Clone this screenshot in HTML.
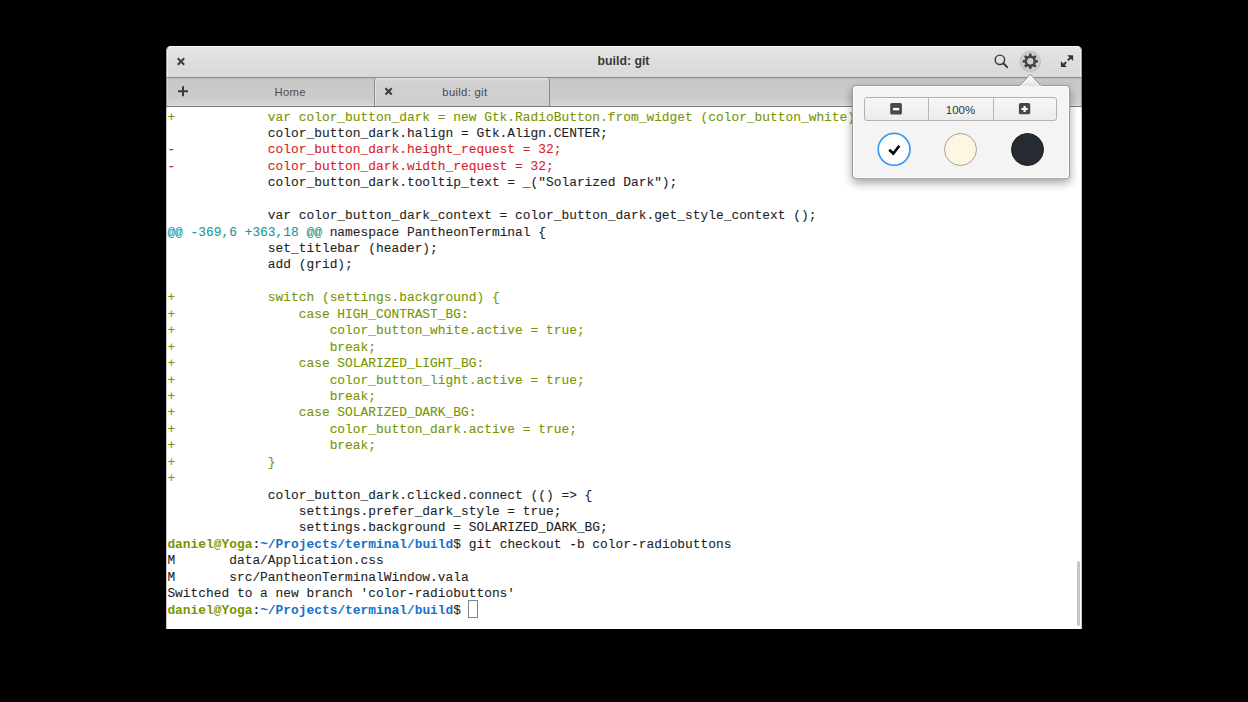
<!DOCTYPE html>
<html><head><meta charset="utf-8">
<style>
html,body{margin:0;padding:0;width:1248px;height:702px;overflow:hidden;background:#000;}
*{box-sizing:border-box;}
.a{position:absolute;}
#win{position:absolute;left:166px;top:46px;width:916px;height:583px;background:#fff;border-radius:5px 5px 0 0;overflow:hidden;}
#title{position:absolute;left:0;top:0;width:916px;height:31px;background:linear-gradient(#e4e4e4,#d8d8d8);border-top:1px solid #f6f6f6;border-left:1px solid #a0a0a0;border-right:1px solid #a0a0a0;border-radius:5px 5px 0 0;box-shadow:inset 1px 0 0 #f0f0f0,inset -1px 0 0 #f0f0f0;}
#tline{position:absolute;left:0;top:31px;width:916px;height:1px;background:#8c8c8c;}
#tabs{position:absolute;left:0;top:32px;width:916px;height:28px;background:linear-gradient(#b9b9b9 0,#c8c8c8 2px,#cccccc 20px,#d4d4d4 26px,#dcdcdc 28px);border-left:1px solid #8e8e8e;border-right:1px solid #8e8e8e;box-shadow:inset 1px 0 0 #d8d8d8;}
#bline{position:absolute;left:0;top:60px;width:916px;height:1px;background:#7c7c7c;}
#term{position:absolute;left:0;top:61px;width:916px;height:522px;background:#fff;border-left:1px solid #c4c4c4;border-right:1px solid #c4c4c4;}
.ttl{position:absolute;left:-1.5px;width:916px;top:7px;text-align:center;font:bold 12.3px "Liberation Sans",sans-serif;color:#3a3a3a;}
#activetab{position:absolute;left:207px;width:176px;top:0;height:29px;background:linear-gradient(#d9d9d9,#d1d1d1 4px,#cfcfcf);border:1px solid #8a8a8a;border-top:none;border-bottom:none;border-radius:3px 3px 0 0;box-shadow:inset 1px 1px 0 #e4e4e4;}
.tabtxt{position:absolute;font:11.3px "Liberation Sans",sans-serif;letter-spacing:0.3px;color:#555;white-space:nowrap;}
pre{margin:0;font-family:"Liberation Mono",monospace;font-size:12.887px;line-height:16.437px;color:#1f1f1f;-webkit-text-stroke:0.1px currentColor;}
#text{position:absolute;left:1.4px;top:63.5px;}
.g{color:#789500}.r{color:#d81e1e}.c{color:#19999a}.b{color:#1770cc}.bd{font-weight:bold;-webkit-text-stroke:0}
#sb{position:absolute;left:911px;top:515px;width:3px;height:65px;border-radius:2px;background:#c6c6c6;}
#cursor{position:absolute;left:302px;top:554px;width:10px;height:18px;border:1px solid #74878a;}
#pop{position:absolute;left:852px;top:85px;width:218px;height:94px;background:#f4f4f4;border:1px solid #999;border-bottom-color:#a8a8a8;border-radius:4px;box-shadow:0 4px 10px rgba(0,0,0,.36),inset 1px 1px 0 #fff,inset -1px -1px 0 #fff;}
#btns{position:absolute;left:11px;top:11px;width:193px;height:24px;border:1px solid #b2b2b2;border-radius:3px;background:linear-gradient(#f7f7f7,#ececec);}
.sep{position:absolute;top:0;width:1px;height:22px;background:#b7b7b7;}
.pct{position:absolute;left:63px;width:65px;top:5.5px;text-align:center;font:11.5px "Liberation Sans",sans-serif;color:#333;}
.circ{position:absolute;width:34px;height:34px;border-radius:50%;}
svg{position:absolute;overflow:visible;}
</style></head>
<body>
<div id="win">
  <div id="title">
    <div class="ttl">build: git</div>
  </div>
  <div id="tline"></div>
  <div id="tabs">
    <div id="activetab"></div>
    <div class="tabtxt" style="left:107.5px;top:8px;color:#505050">Home</div>
    <div class="tabtxt" style="left:275.3px;top:8px;color:#4a4a4a">build: git</div>
  </div>
  <div id="bline"></div>
  <div id="term"></div>
  <pre id="text"><span class="g">+            var color_button_dark = new Gtk.RadioButton.from_widget (color_button_white);</span>
             color_button_dark.halign = Gtk.Align.CENTER;
<span class="r">-            color_button_dark.height_request = 32;</span>
<span class="r">-            color_button_dark.width_request = 32;</span>
             color_button_dark.tooltip_text = _("Solarized Dark");

             var color_button_dark_context = color_button_dark.get_style_context ();
<span class="c">@@ -369,6 +363,18 @@</span> namespace PantheonTerminal {
             set_titlebar (header);
             add (grid);

<span class="g">+            switch (settings.background) {</span>
<span class="g">+                case HIGH_CONTRAST_BG:</span>
<span class="g">+                    color_button_white.active = true;</span>
<span class="g">+                    break;</span>
<span class="g">+                case SOLARIZED_LIGHT_BG:</span>
<span class="g">+                    color_button_light.active = true;</span>
<span class="g">+                    break;</span>
<span class="g">+                case SOLARIZED_DARK_BG:</span>
<span class="g">+                    color_button_dark.active = true;</span>
<span class="g">+                    break;</span>
<span class="g">+            }</span>
<span class="g">+</span>
             color_button_dark.clicked.connect (() => {
                 settings.prefer_dark_style = true;
                 settings.background = SOLARIZED_DARK_BG;
<span class="g bd">daniel@Yoga</span>:<span class="b bd">~/Projects/terminal/build</span>$ git checkout -b color-radiobuttons
M       data/Application.css
M       src/PantheonTerminalWindow.vala
Switched to a new branch 'color-radiobuttons'
<span class="g bd">daniel@Yoga</span>:<span class="b bd">~/Projects/terminal/build</span>$ </pre>
  <div id="sb"></div>
  <div id="cursor"></div>
</div>

<!-- titlebar icons (absolute page coords) -->
<svg style="left:0;top:0" width="1248" height="702">
  <!-- close x -->
  <path d="M177.8 58.3 L184.2 64.7 M184.2 58.3 L177.8 64.7" stroke="#3c3c3c" stroke-width="2" fill="none"/>
  <!-- search -->
  <circle cx="999.9" cy="59.8" r="4.7" stroke="#3a3a3a" stroke-width="1.45" fill="none"/>
  <path d="M1003.3 63.2 L1007.2 67.1" stroke="#3a3a3a" stroke-width="2" stroke-linecap="round"/>
  <!-- gear pressed bg -->
  <circle cx="1030.4" cy="61.45" r="10" fill="#cfcfcf" stroke="#bdbdbd" stroke-width="1.2"/>
  <!-- gear -->
  <g transform="translate(1030.3 61.3)" fill="#444">
    <circle r="5.8"/>
    <rect x="-1.35" y="-7.7" width="2.7" height="15.4" rx="0.8"/>
    <rect x="-1.35" y="-7.7" width="2.7" height="15.4" rx="0.8" transform="rotate(45)"/>
    <rect x="-1.35" y="-7.7" width="2.7" height="15.4" rx="0.8" transform="rotate(90)"/>
    <rect x="-1.35" y="-7.7" width="2.7" height="15.4" rx="0.8" transform="rotate(135)"/>
    <circle r="3.2" fill="#cdcdcd"/>
  </g>
  <!-- expand -->
  <g fill="#333">
    <path d="M1067.2 55.2 L1073.1 55.2 L1073.1 61.1 Z"/>
    <path d="M1060.9 61.2 L1060.9 67.1 L1066.8 67.1 Z"/>
  </g>
  <path d="M1070.5 57.8 L1067.9 60.4 M1066.2 62.1 L1063.6 64.7" stroke="#333" stroke-width="2"/>
  <!-- new tab + -->
  <path d="M178 91.2 H188 M183 86.2 V96.2" stroke="#3a3a3a" stroke-width="2"/>
  <!-- tab close x -->
  <path d="M385.5 88.3 L391.7 94.5 M391.7 88.3 L385.5 94.5" stroke="#3a3a3a" stroke-width="2"/>
  <!-- popover arrow -->
  <path d="M1019 86.5 L1030.3 74.4 L1041.6 86.5 Z" fill="#f4f4f4" stroke="#8f8f8f" stroke-width="1"/>
</svg>

<div id="pop">
  <div id="btns">
    <div class="sep" style="left:63px"></div>
    <div class="sep" style="left:128px"></div>
    <div class="pct">100%</div>
  </div>
  
  <div class="circ" style="left:91px;top:46.5px;width:33px;height:33px;background:#fdf6e3;border:1px solid #a9a08e;"></div>
  <div class="circ" style="left:158px;top:46.5px;width:33px;height:33px;background:#252b30;border:1px solid #1a1f22;"></div>
</div>
<svg style="left:0;top:0" width="1248" height="702">
  <!-- cover arrow base line -->
  <rect x="1020" y="85.2" width="21" height="1.8" fill="#f4f4f4"/><path d="M1020.8 86.2 L1030.3 76 L1039.8 86.2" stroke="#fff" stroke-width="1" fill="none"/>
  <!-- minus -->
  <rect x="890.2" y="103" width="11.7" height="11.5" rx="1.6" fill="#484848"/>
  <rect x="893" y="107.9" width="6.2" height="2.4" fill="#fff"/>
  <!-- plus -->
  <rect x="1018.9" y="103" width="11.3" height="11.3" rx="1.6" fill="#484848"/>
  <path d="M1021.5 109 H1027.7 M1024.6 105.9 V112.1" stroke="#fff" stroke-width="2.2"/>
  <circle cx="894.1" cy="149.3" r="15.9" fill="#fff" stroke="#3d9af2" stroke-width="1.7"/>
  <!-- check -->
  <path d="M889.2 149.8 L893.3 153.5 L899.3 145.8" stroke="#000" stroke-width="2.6" fill="none"/>
</svg>
</body></html>
